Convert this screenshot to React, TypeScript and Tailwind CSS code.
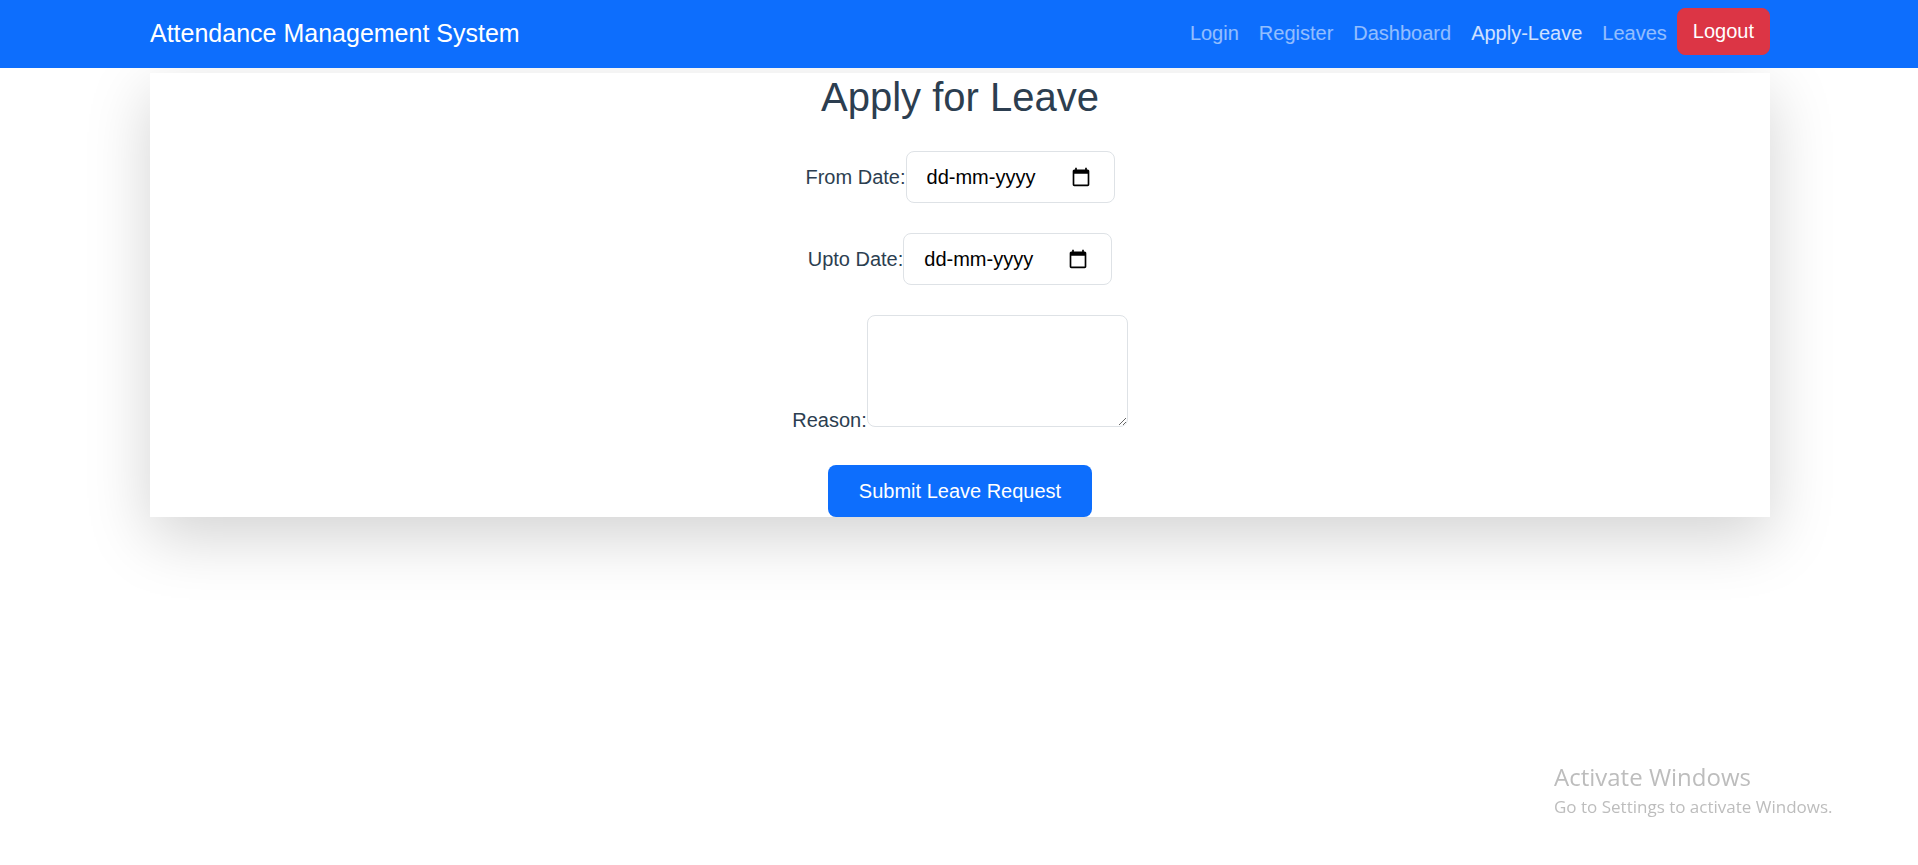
import { useState } from "react";

const links = ["Login", "Register", "Dashboard", "Apply-Leave", "Leaves"];
const activeLink = "Apply-Leave";

function NavBar() {
  return (
    <nav className="relative z-10 bg-[#0d6efd] pt-2 pb-2.5">
      <div className="mx-auto flex max-w-[1650px] flex-wrap items-start justify-between pr-3.5 pl-4">
        <a href="#home" className="py-1.5 text-[25px] leading-[38px] text-white">
          Attendance Management System
        </a>
        <ul className="flex flex-wrap items-start">
          {links.map((link) => (
            <li key={link}>
              <a
                href={"#" + link.toLowerCase()}
                className={
                  link === activeLink
                    ? "block px-2.5 py-2.5 leading-[30px] text-white/80"
                    : "block px-2.5 py-2.5 leading-[30px] text-white/55"
                }
              >
                {link}
              </a>
            </li>
          ))}
          <li>
            <button
              type="button"
              className="rounded-lg border border-[#dc3545] bg-[#dc3545] px-[15px] py-2 leading-[29px] text-white"
            >
              Logout
            </button>
          </li>
        </ul>
      </div>
    </nav>
  );
}

type DateFieldProps = {
  id: string;
  label: string;
};

function DateField({ id, label }: DateFieldProps) {
  const [value, setValue] = useState("");

  return (
    <div className="flex items-center justify-center">
      <label htmlFor={id}>{label}</label>
      <div className="flex w-[209px] items-center rounded-lg border border-[#dee2e6] bg-white pr-[23px]">
        <input
          id={id}
          type="text"
          inputMode="numeric"
          placeholder="dd-mm-yyyy"
          value={value}
          onChange={(event) => setValue(event.target.value)}
          className="min-w-0 flex-1 bg-transparent py-2.5 pl-5 leading-[30px] text-black outline-none placeholder:text-black"
        />
        <button type="button" aria-label={"Open calendar for " + label}>
          <svg viewBox="0 0 24 24" className="size-5 fill-black" aria-hidden="true">
            <path d="M20 3h-1V1h-2v2H7V1H5v2H4c-1.1 0-2 .9-2 2v16c0 1.1.9 2 2 2h16c1.1 0 2-.9 2-2V5c0-1.1-.9-2-2-2zm0 18H4V8h16v13z" />
          </svg>
        </button>
      </div>
    </div>
  );
}

function LeaveForm() {
  return (
    <form
      onSubmit={(event) => event.preventDefault()}
      className="flex flex-col bg-white text-[#2c3e50] shadow-[0_20px_60px_rgba(0,0,0,0.175)]"
    >
      <h2 className="mb-[30px] text-center text-[40px] leading-[48px]">Apply for Leave</h2>
      <div className="flex flex-col gap-[30px]">
        <DateField id="from-date" label="From Date:" />
        <DateField id="upto-date" label="Upto Date:" />
        <div className="flex items-end justify-center">
          <label htmlFor="reason">Reason:</label>
          <textarea
            id="reason"
            className="mb-2 h-28 w-[261px] resize rounded-lg border border-[#dee2e6] bg-white px-5 py-2.5 text-black outline-none"
          />
        </div>
        <button
          type="submit"
          className="self-center rounded-lg bg-[#0d6efd] px-[31px] py-[11px] leading-[30px] text-white"
        >
          Submit Leave Request
        </button>
      </div>
    </form>
  );
}

export default function App() {
  return (
    <div className="min-h-screen overflow-x-hidden bg-white font-['Liberation_Sans',Arial,sans-serif] text-[20px] leading-[30px]">
      <NavBar />
      <main className="mx-auto mt-[5px] max-w-[1650px] pr-3.5 pl-4">
        <LeaveForm />
      </main>
      <aside className="pointer-events-none fixed right-20 bottom-11 w-[284px] font-['Open_Sans','Noto_Sans',sans-serif] text-[#bdbdbd]">
        <p className="text-[24px] leading-8">Activate Windows</p>
        <p className="text-[17px] leading-7">Go to Settings to activate Windows.</p>
      </aside>
    </div>
  );
}
